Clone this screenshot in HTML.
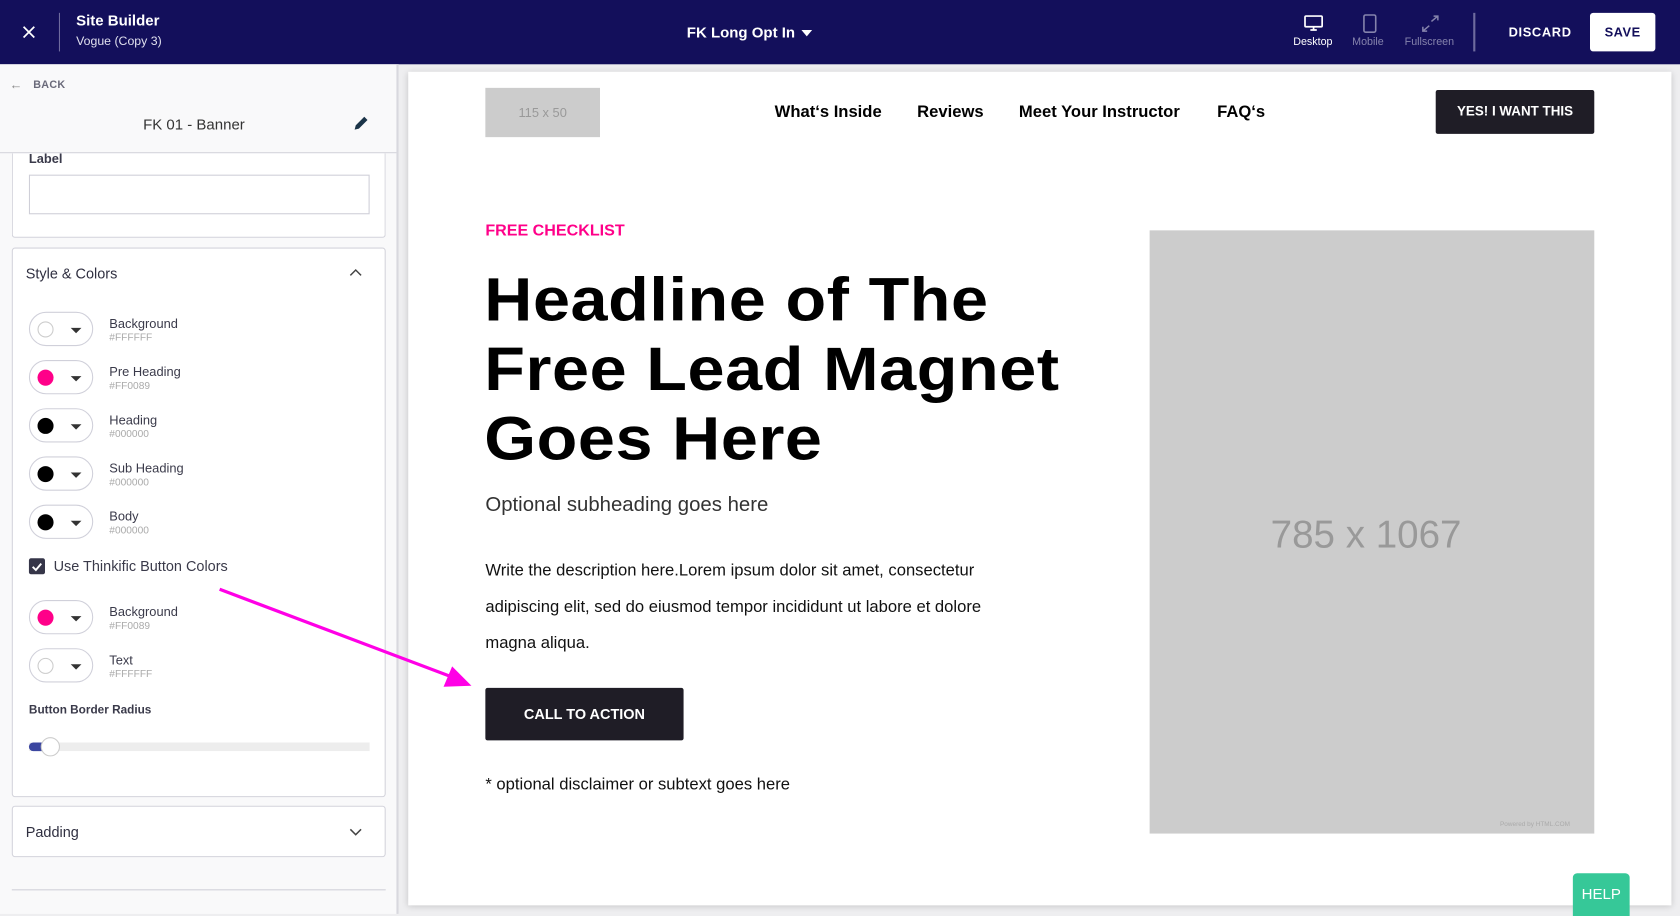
<!DOCTYPE html>
<html><head><meta charset="utf-8"><style>
*{box-sizing:border-box;margin:0;padding:0}
html,body{width:1680px;height:914px;overflow:hidden;background:#eeeef0;font-family:"Liberation Sans",sans-serif}
#w{position:absolute;left:0;top:0;width:1568px;height:853px;transform:scale(1.071429);transform-origin:0 0}
.a{position:absolute}
.top{left:0;top:0;width:1568px;height:60px;background:#130f5b;color:#fff}
.lp{left:0;top:60px;width:372px;height:793px;background:#f9f9fa;border-right:2px solid #d8d8de}
.card{background:#fff;border:1px solid #d4d4dc;border-radius:3px}
.pill{width:60px;height:32px;border:1px solid #d0d0da;border-radius:16px;background:#fff}
.dot{position:absolute;left:7px;top:8px;width:15px;height:15px;border-radius:50%}
.car{position:absolute;left:38px;top:14px;border-left:5px solid transparent;border-right:5px solid transparent;border-top:5px solid #333}
.lbl{font-size:12px;color:#3a3a4a}
.hex{font-size:9.5px;color:#aaa}
.nav{font-size:15.5px;font-weight:bold;color:#000;top:96px}
</style></head><body><div id="w">
<div class="a top">
 <svg class="a" style="left:21px;top:24px" width="12" height="12"><path d="M1 1L11 11M11 1L1 11" stroke="#fff" stroke-width="1.6"/></svg>
 <div class="a" style="left:55px;top:12px;width:1px;height:36px;background:#6e6b9e"></div>
 <div class="a" style="left:71px;top:11px;font-size:14px;font-weight:bold">Site Builder</div>
 <div class="a" style="left:71px;top:33px;font-size:11.5px;color:#e0e0ee">Vogue (Copy 3)</div>
 <div class="a" style="left:641px;top:22px;font-size:14px;font-weight:bold">FK Long Opt In</div>
 <div class="a" style="left:748px;top:28px;border-left:5px solid transparent;border-right:5px solid transparent;border-top:6px solid #fff"></div>
 <svg class="a" style="left:1217px;top:14px" width="18" height="16"><rect x="1" y="1" width="16" height="10" rx="1" fill="none" stroke="#fff" stroke-width="1.6"/><path d="M6 14h6M9 11v3" stroke="#fff" stroke-width="1.6"/></svg>
 <div class="a" style="left:1207px;top:34px;font-size:10px">Desktop</div>
 <svg class="a" style="left:1272px;top:13px" width="13" height="18"><rect x="1" y="1" width="11" height="16" rx="1.5" fill="none" stroke="#8583ac" stroke-width="1.5"/></svg>
 <div class="a" style="left:1262px;top:34px;font-size:10px;color:#8583ac">Mobile</div>
 <svg class="a" style="left:1326px;top:14px" width="18" height="16"><path d="M10 6l6-5M12 1h4v4M8 10l-6 5M2 11v4h4" stroke="#8583ac" stroke-width="1.4" fill="none"/></svg>
 <div class="a" style="left:1311px;top:34px;font-size:10px;color:#8583ac">Fullscreen</div>
 <div class="a" style="left:1375px;top:12px;width:2px;height:36px;background:#6e6b9e"></div>
 <div class="a" style="left:1408px;top:23px;font-size:12px;font-weight:bold;letter-spacing:.6px">DISCARD</div>
 <div class="a" style="left:1484px;top:12px;width:61px;height:36px;background:#fff;border-radius:3px;color:#130f5b;font-size:12px;font-weight:bold;text-align:center;line-height:36px;letter-spacing:.5px">SAVE</div>
</div>
<div class="a lp">
 <div class="a" style="left:9px;top:12px;font-size:12px;color:#888">&#8592;</div>
 <div class="a" style="left:31px;top:14px;font-size:10px;color:#6a6a7a;font-weight:bold;letter-spacing:.3px">BACK</div>
 <div class="a" style="left:0;width:370px;top:48px;text-align:center;font-size:14px;color:#333;padding-right:8px">FK 01 - Banner</div>
 <svg class="a" style="left:329px;top:47px" width="16" height="16"><path d="M2 14l1-4 8-8 3 3-8 8z" fill="#1b3448"/></svg>
 <div class="a card" style="left:11px;top:83px;width:349px;height:79px;border-top:none;border-radius:0 0 3px 3px"></div>
 <div class="a" style="left:0;top:82px;width:370px;height:1px;background:#d4d4dc"></div>
 <div class="a" style="left:27px;top:81px;font-size:12px;color:#3a3a4a;font-weight:bold">Label</div>
 <div class="a" style="left:27px;top:103px;width:318px;height:37px;border:1px solid #cfcfd8;background:#fff"></div>
 <div class="a card" style="left:11px;top:171px;width:349px;height:513px"></div>
 <div class="a" style="left:24px;top:188px;font-size:13.5px;color:#2f2f40">Style &amp; Colors</div>
 <svg class="a" style="left:326px;top:190px" width="12" height="8"><path d="M1 7l5-5 5 5" stroke="#444" stroke-width="1.4" fill="none"/></svg>
 <div class="a pill" style="left:27px;top:231px"><div class="dot" style="border:1px solid #ccc"></div><div class="car"></div></div>
 <div class="a lbl" style="left:102px;top:235px">Background</div><div class="a hex" style="left:102px;top:250px">#FFFFFF</div>
 <div class="a pill" style="left:27px;top:276px"><div class="dot" style="background:#ff0089"></div><div class="car"></div></div>
 <div class="a lbl" style="left:102px;top:280px">Pre Heading</div><div class="a hex" style="left:102px;top:295px">#FF0089</div>
 <div class="a pill" style="left:27px;top:321px"><div class="dot" style="background:#000"></div><div class="car"></div></div>
 <div class="a lbl" style="left:102px;top:325px">Heading</div><div class="a hex" style="left:102px;top:340px">#000000</div>
 <div class="a pill" style="left:27px;top:366px"><div class="dot" style="background:#000"></div><div class="car"></div></div>
 <div class="a lbl" style="left:102px;top:370px">Sub Heading</div><div class="a hex" style="left:102px;top:385px">#000000</div>
 <div class="a pill" style="left:27px;top:411px"><div class="dot" style="background:#000"></div><div class="car"></div></div>
 <div class="a lbl" style="left:102px;top:415px">Body</div><div class="a hex" style="left:102px;top:430px">#000000</div>
 <div class="a" style="left:27px;top:461px;width:15px;height:15px;background:#353548;border-radius:2px"></div>
 <svg class="a" style="left:29px;top:463px" width="11" height="11"><path d="M1.5 6l3 3 5-6" stroke="#fff" stroke-width="1.8" fill="none"/></svg>
 <div class="a" style="left:50px;top:461px;font-size:13.5px;color:#3a3a4a">Use Thinkific Button Colors</div>
 <div class="a pill" style="left:27px;top:500px"><div class="dot" style="background:#ff0089"></div><div class="car"></div></div>
 <div class="a lbl" style="left:102px;top:504px">Background</div><div class="a hex" style="left:102px;top:519px">#FF0089</div>
 <div class="a pill" style="left:27px;top:545px"><div class="dot" style="border:1px solid #ccc"></div><div class="car"></div></div>
 <div class="a lbl" style="left:102px;top:549px">Text</div><div class="a hex" style="left:102px;top:564px">#FFFFFF</div>
 <div class="a" style="left:27px;top:597px;font-size:11px;font-weight:bold;color:#3a3a4a">Button Border Radius</div>
 <div class="a" style="left:27px;top:633px;width:318px;height:8px;background:#ededed"></div>
 <div class="a" style="left:27px;top:633px;width:16px;height:8px;background:#3b46a0;border-radius:4px 0 0 4px"></div>
 <div class="a" style="left:38px;top:628px;width:18px;height:18px;border-radius:50%;background:#fff;border:1px solid #ccc"></div>
 <div class="a card" style="left:11px;top:692px;width:349px;height:48px"></div>
 <div class="a" style="left:24px;top:709px;font-size:13.5px;color:#2f2f40">Padding</div>
 <svg class="a" style="left:326px;top:713px" width="12" height="8"><path d="M1 1l5 5 5-5" stroke="#444" stroke-width="1.4" fill="none"/></svg>
 <div class="a" style="left:11px;top:770px;width:349px;height:1px;background:#d0d0d8"></div>
</div>
<div class="a" style="left:381px;top:67px;width:1179px;height:778px;background:#fff;box-shadow:0 1px 6px rgba(0,0,0,.18)"></div>
<div class="a" style="left:453px;top:82px;width:107px;height:46px;background:#ccc;color:#999;font-size:12px;text-align:center;line-height:46px">115 x 50</div>
<div class="a nav" style="left:723px">What‘s Inside</div>
<div class="a nav" style="left:856px">Reviews</div>
<div class="a nav" style="left:951px">Meet Your Instructor</div>
<div class="a nav" style="left:1136px">FAQ‘s</div>
<div class="a" style="left:1340px;top:84px;width:148px;height:41px;background:#1f1d26;border-radius:2px;color:#fff;font-size:12.5px;font-weight:bold;text-align:center;line-height:41px">YES! I WANT THIS</div>
<div class="a" style="left:453px;top:207px;font-size:15px;font-weight:bold;color:#ff0089">FREE CHECKLIST</div>
<div class="a" style="left:452px;top:248px;font-size:57px;line-height:65px;font-weight:900;color:#000;letter-spacing:.5px;transform:scaleX(1.09);transform-origin:0 0;white-space:nowrap">Headline of The<br>Free Lead Magnet<br>Goes Here</div>
<div class="a" style="left:453px;top:461px;font-size:19px;color:#333">Optional subheading goes here</div>
<div class="a" style="left:453px;top:516px;font-size:15.5px;line-height:34px;color:#111;width:495px">Write the description here.Lorem ipsum dolor sit amet, consectetur adipiscing elit, sed do eiusmod tempor incididunt ut labore et dolore magna aliqua.</div>
<div class="a" style="left:453px;top:642px;width:185px;height:49px;background:#1f1d26;border-radius:2px;color:#fff;font-size:13.5px;font-weight:bold;text-align:center;line-height:49px">CALL TO ACTION</div>
<div class="a" style="left:453px;top:724px;font-size:15.5px;color:#111">* optional disclaimer or subtext goes here</div>
<div class="a" style="left:1073px;top:215px;width:415px;height:563px;background:#ccc"></div>
<div class="a" style="left:1073px;top:478px;width:404px;text-align:center;font-size:36px;color:#999">785 x 1067</div>
<div class="a" style="left:1400px;top:767px;font-size:6px;color:#aaa">Powered by HTML.COM</div>
<svg class="a" style="left:0;top:0" width="1568" height="853"><path d="M205 550L425 633" stroke="#ff00e6" stroke-width="3"/><path d="M440 640L414 641L422 622z" fill="#ff00e6"/></svg>
<div class="a" style="left:1468px;top:815px;width:53px;height:40px;background:#36c898;border-radius:4px 4px 0 0;color:#fff;font-size:14px;text-align:center;line-height:38px">HELP</div>
</div></body></html>
